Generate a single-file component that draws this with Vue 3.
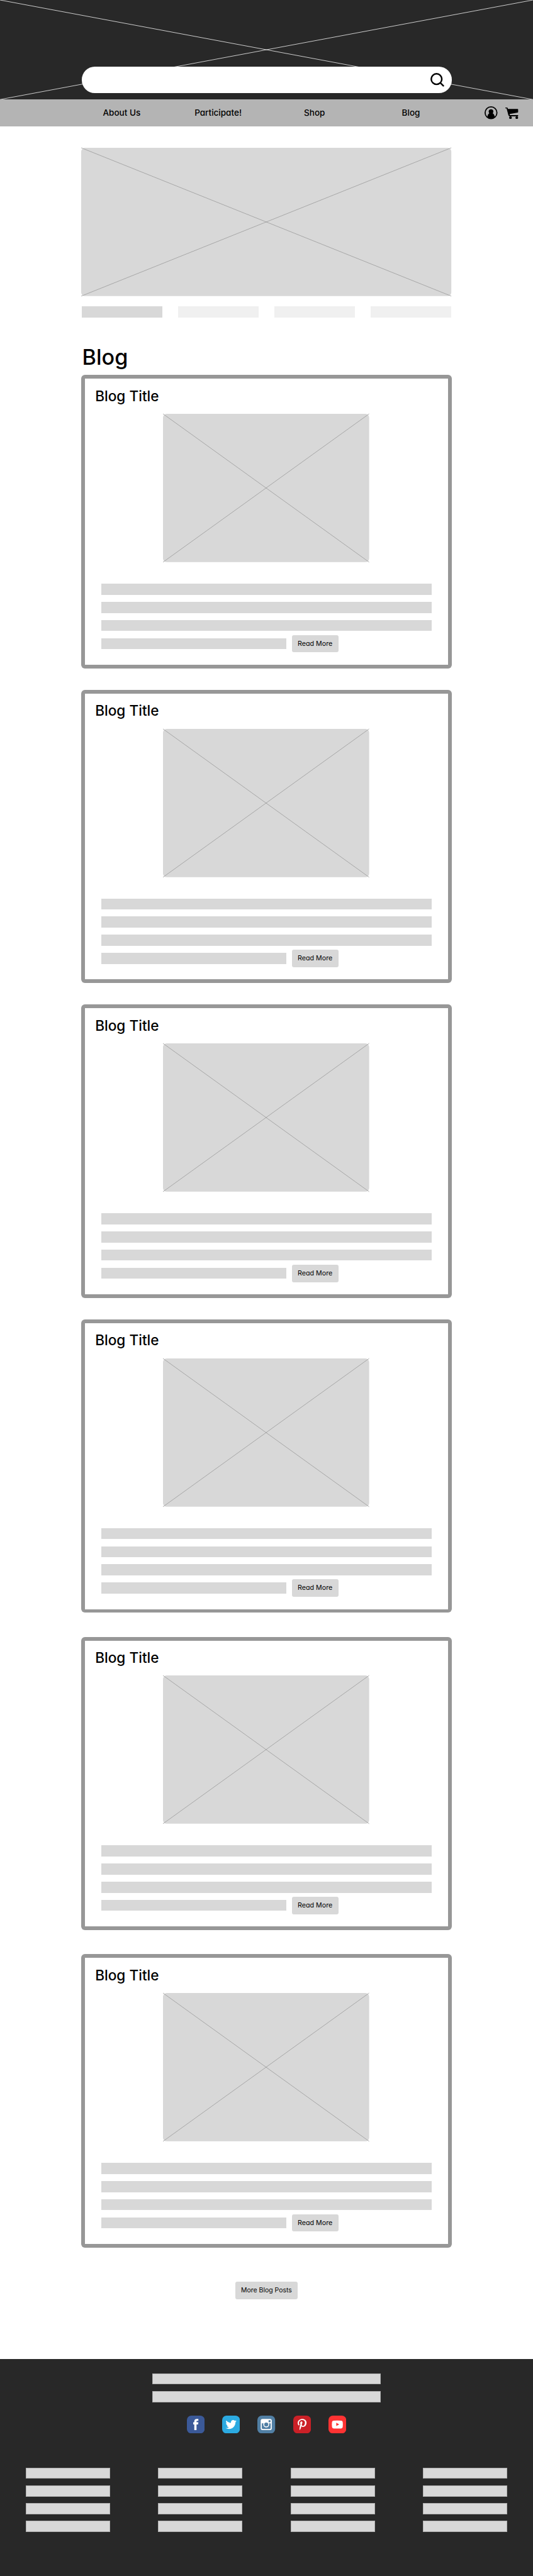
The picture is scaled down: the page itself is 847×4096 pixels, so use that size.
<script setup>
const nav = ['About Us', 'Participate!', 'Shop', 'Blog']
</script>

<template>
  <div class="page">
    <header class="banner">
      <svg class="cross" viewBox="0 0 1440 269" preserveAspectRatio="none">
        <path d="M0 0L1440 269M1440 0L0 269" />
      </svg>
      <div class="search">
        <svg class="search-icon" viewBox="0 0 38 38">
          <circle cx="16.5" cy="16.5" r="14.3" />
          <path d="M27 27L34.8 34.8" />
        </svg>
      </div>
    </header>

    <nav class="nav">
      <div class="links">
        <a v-for="label in nav" :key="label"><span>{{ label }}</span></a>
      </div>
      <svg class="user" viewBox="0 0 35 35">
        <circle cx="17.5" cy="17.5" r="16" fill="none" stroke="#000" stroke-width="3" />
        <circle cx="17.5" cy="14.2" r="6.3" />
        <path d="M13 18.5H22C25.5 21 27.5 25 27.6 30Q23 34 17.5 34Q12 34 7.4 30C7.5 25 9.5 21 13 18.5Z" />
      </svg>
      <svg class="cart" viewBox="0 0 105 94">
        <path d="M0 0H14Q18 0 19 4L21 12H100Q104 12 104 16V36Q104 40 100 41L37 52Q33 54 36 59Q37 61 40 61H104V71H36Q28 71 25 62L10 7H0Z" />
        <circle cx="42" cy="82" r="11" />
        <circle cx="93" cy="82" r="11" />
      </svg>
    </nav>

    <main class="main">
      <svg class="hero" viewBox="0 0 1000 401" preserveAspectRatio="none">
        <rect width="1000" height="401" rx="10" />
        <path d="M0 0L1000 401M1000 0L0 401" />
      </svg>
      <div class="tabs"><i v-for="t in 4" :key="t"></i></div>

      <h1><span>Blog</span></h1>

      <article v-for="c in 6" :key="c" class="card">
        <div class="body">
          <h2><span>Blog Title</span></h2>
          <svg class="pic" viewBox="0 0 557 401" preserveAspectRatio="none">
            <rect width="557" height="401" rx="10" />
            <path d="M0 0L557 401M557 0L0 401" />
          </svg>
          <div class="lines">
            <i></i><i></i><i></i>
            <div class="last">
              <i></i>
              <button class="btn read"><span>Read More</span></button>
            </div>
          </div>
        </div>
      </article>

      <button class="btn more"><span>More Blog Posts</span></button>
    </main>

    <footer class="footer">
      <div class="wide"><i></i><i></i></div>
      <div class="social">
        <svg viewBox="0 0 48 48">
          <rect width="48" height="48" rx="12" fill="#3b5998" />
          <path fill="#fff" d="M31 9h-4.500c-4 0-6.500 2.500-6.500 6.500V18h-3v6h3v15h6V24h4.300l.7-6h-5v-2.200c0-1.200.6-1.800 1.600-1.800H31z" />
        </svg>
        <svg viewBox="0 0 48 48">
          <rect width="48" height="48" rx="12" fill="#2caae1" />
          <path fill="#fff" transform="translate(9.3 9.2) scale(1.237)" d="M23.954 4.569c-.885.389-1.83.654-2.825.775 1.014-.611 1.794-1.574 2.163-2.723-.951.555-2.005.959-3.127 1.184-.896-.959-2.173-1.559-3.591-1.559-2.717 0-4.92 2.203-4.92 4.917 0 .39.045.765.127 1.124C7.691 8.094 4.066 6.13 1.64 3.161c-.427.722-.666 1.561-.666 2.475 0 1.71.87 3.213 2.188 4.096-.807-.026-1.566-.248-2.228-.616v.061c0 2.385 1.693 4.374 3.946 4.827-.413.111-.849.171-1.296.171-.314 0-.615-.03-.916-.086.631 1.953 2.445 3.377 4.604 3.417-1.68 1.319-3.809 2.105-6.102 2.105-.39 0-.779-.023-1.17-.067 2.189 1.394 4.768 2.209 7.557 2.209 9.054 0 13.999-7.496 13.999-13.986 0-.209 0-.42-.015-.63.961-.689 1.8-1.56 2.46-2.548l-.047-.02z" />
        </svg>
        <svg viewBox="0 0 48 48">
          <rect width="48" height="48" rx="12" fill="#517fa4" />
          <rect x="9" y="9" width="30" height="30" rx="5" fill="#fff" />
          <path fill="#517fa4" d="M12 21H36V33.500Q36 36 33.500 36H14.500Q12 36 12 33.500Z" />
          <circle cx="24" cy="24" r="6.750" fill="#517fa4" stroke="#fff" stroke-width="2.600" />
          <rect x="30.300" y="12.400" width="5.300" height="5.300" rx=".6" fill="#517fa4" />
        </svg>
        <svg viewBox="0 0 48 48">
          <rect width="48" height="48" rx="12" fill="#cb2027" />
          <path fill="#fff" transform="translate(12 8.6) scale(.0625 .0603)" d="M204 6.500C101.400 6.500 0 74.900 0 185.600 0 256 39.600 296 63.600 296c9.900 0 15.600-27.600 15.600-35.400 0-9.300-23.700-29.100-23.700-67.800 0-80.400 61.200-137.400 140.400-137.400 68.100 0 118.500 38.700 118.500 109.800 0 53.100-21.300 152.700-90.300 152.700-24.900 0-46.200-18-46.200-43.800 0-37.800 26.400-74.400 26.400-113.400 0-66.200-93.900-54.200-93.900 25.800 0 16.800 2.100 35.400 9.600 50.700-13.800 59.400-42 147.900-42 209.100 0 18.900 2.700 37.500 4.500 56.400 3.400 3.800 1.700 3.400 6.900 1.500 50.400-69 48.600-82.500 71.400-172.800 12.300 23.400 44.100 36 69.300 36 106.200 0 153.900-103.500 153.900-196.800C384 71.300 298.200 6.500 204 6.500z" />
        </svg>
        <svg viewBox="0 0 48 48">
          <rect width="48" height="48" rx="12" fill="#ff3333" />
          <path fill="#fff" d="M14 13.400Q24 12.600 34 13.400Q37.800 13.500 38.400 17Q39.400 24 38.400 31Q37.800 34.500 34 34.700Q24 35.400 14 34.700Q10.200 34.500 9.600 31Q8.600 24 9.600 17Q10.200 13.500 14 13.400Z" />
          <path fill="#ff3333" d="M21 19.300L29 23.700L21 28.200Z" />
        </svg>
      </div>
      <div class="cols">
        <div v-for="c in 4" :key="c" class="col"><i v-for="r in 4" :key="r"></i></div>
      </div>
    </footer>
  </div>
</template>

<style>
/* 1rem stands for 100 design pixels of the 1440-wide layout */
html { font-size: 58.8194px; background: #fff; }
body { margin: 0; font-size: 16px; }
</style>

<style scoped>
* { box-sizing: border-box; }
.page {
  width: 14.4rem; height: 4096px; overflow: hidden; display: flex; flex-direction: column;
  background: #fff; color: #000; font-family: Inter, "Liberation Sans", sans-serif;
  font-weight: 500; font-feature-settings: "cv11" 1;
}
svg { display: block; flex: none; }
i { display: block; background: #d8d8d8; }
span { display: block; white-space: nowrap; }

.banner { height: 2.69rem; flex: none; background: #282828; display: grid; }
.cross { grid-area: 1 / 1; width: 14.4rem; height: 2.69rem; stroke: #fff; stroke-width: 1.3; }
.search {
  grid-area: 1 / 1; margin: 1.8rem 0 0 2.21rem; width: 9.99rem; height: .71rem; z-index: 1;
  background: #fff; border-radius: .35rem; display: flex; justify-content: flex-end; align-items: flex-start;
}
.search-icon { width: .38rem; height: .38rem; margin: .168rem .183rem 0 0; fill: none; stroke: #000; stroke-width: 4.2; stroke-linecap: round; }

.nav { height: .73rem; flex: none; background: #b4b4b4; display: flex; }
.links { width: 13.09rem; display: flex; padding-left: 1.985rem; }
.links a { width: 2.605rem; display: flex; justify-content: center; font-size: .23rem; line-height: .73rem; font-weight: 450; }
.user { width: .35rem; height: .35rem; margin-top: .19rem; }
.cart { width: .35rem; height: .313rem; margin: .21rem 0 0 .213rem; }

.main { width: 10rem; margin-left: 2.2rem; height: 60.36rem; flex: none; padding-top: .58rem; }
.hero { width: 10rem; height: 4.01rem; overflow: visible; }
.hero rect, .pic rect { fill: #d8d8d8; }
.hero path, .pic path { stroke: #979797; stroke-width: 1.3; }
.tabs { margin: .27rem .01rem 0; display: flex; justify-content: space-between; }
.tabs i { width: 2.17rem; height: .3rem; background: #f0f0f0; }
.tabs i:first-child { background: #d8d8d8; }
h1 { margin: 0; height: 1.56rem; padding: .72rem 0 0 .02rem; font-size: .58rem; line-height: .7rem; font-weight: 500; }

.card { height: 7.93rem; background: #979797; border-radius: .1rem; padding: .1rem; margin-bottom: .58rem; }
.card:nth-of-type(4), .card:nth-of-type(5) { margin-bottom: .65rem; }
.body { height: 7.73rem; background: #fff; display: flex; flex-direction: column; }
h2 { margin: 0; height: .95rem; padding: .21rem 0 0 .27rem; font-size: .385rem; line-height: .5rem; font-weight: 500; }
.pic { width: 5.57rem; height: 4.01rem; margin-left: 2.11rem; overflow: visible; }
.lines { margin: .58rem 0 0 .437rem; width: 8.92rem; display: flex; flex-direction: column; gap: .19rem; }
.lines i { height: .3rem; }
.last { display: flex; }
.last i { width: 4.995rem; }
.btn {
  border: 0; padding: 0; margin: 0; background: #d8d8d8; border-radius: .05rem; color: #000;
  font: inherit; font-feature-settings: inherit; display: flex; align-items: center; justify-content: center;
  height: .47rem; font-size: .182rem; line-height: .3rem; font-weight: 400;
}
.read { width: 1.26rem; margin: -.08rem 0 -.1rem .15rem; }
.more { width: 1.67rem; margin: .93rem 0 0 4.165rem; font-size: .178rem; }

.footer { flex: 1; background: #282828; display: flex; flex-direction: column; align-items: center; padding-top: .38rem; }
.footer i { height: .3rem; border: 1px solid #b0b0b0; }
.wide { width: 6.18rem; display: flex; flex-direction: column; gap: .18rem; }
.social { display: flex; gap: .48rem; margin-top: .36rem; }
.social svg { width: .48rem; height: .48rem; }
.cols { width: 13.02rem; margin-top: .93rem; display: flex; justify-content: space-between; }
.col { width: 2.28rem; display: flex; flex-direction: column; gap: .18rem; }
</style>
